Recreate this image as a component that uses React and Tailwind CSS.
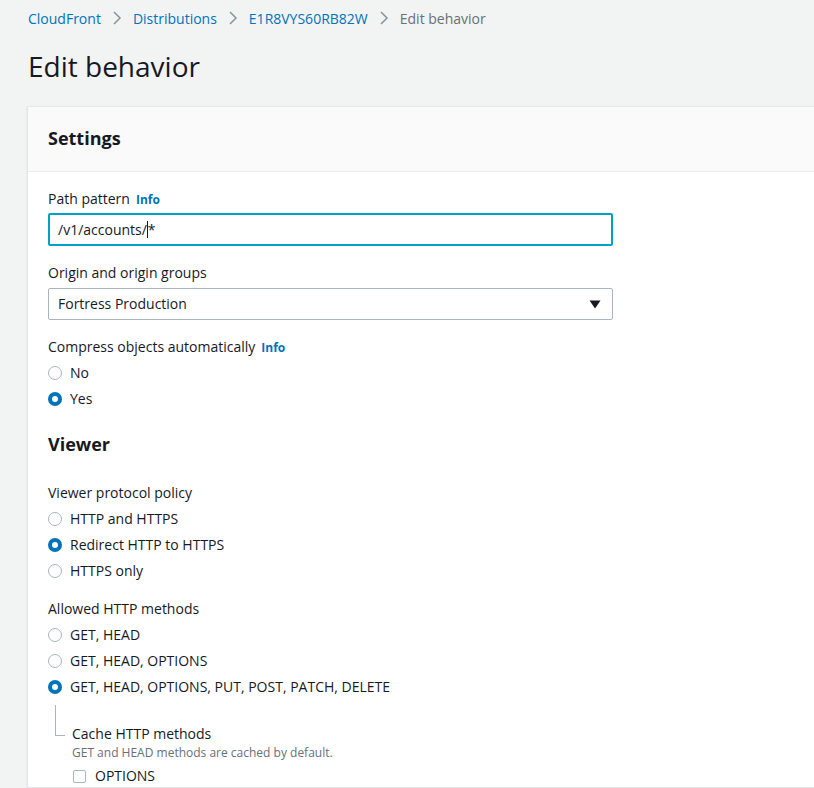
import React from "react";

const FONT = { fontFamily: '"Open Sans", "Liberation Sans", Arial, sans-serif' };

function Chevron() {
  return (
    <svg width="10" height="16" viewBox="0 0 10 16" className="mx-[11px]">
      <path d="M2 2 L8 8 L2 14" fill="none" stroke="#879596" strokeWidth="1.5" />
    </svg>
  );
}

function Radio({ checked, label }) {
  return (
    <div className="flex items-center h-[26px]">
      {checked ? (
        <span className="w-[14px] h-[14px] rounded-full bg-[#0073bb] flex items-center justify-center">
          <span className="w-[6px] h-[6px] rounded-full bg-white" />
        </span>
      ) : (
        <span className="w-[14px] h-[14px] rounded-full border border-[#aab7b8] bg-white" />
      )}
      <span className="ml-[8px] text-[14px] leading-[20px] pb-px text-[#16191f]">{label}</span>
    </div>
  );
}

function Label({ children, info }) {
  return (
    <div className="flex items-baseline h-[22px] pt-px text-[14px] leading-[20px] text-[#16191f]">
      <span>{children}</span>
      {info && <span className="ml-[6px] text-[12px] font-bold text-[#0073bb]">Info</span>}
    </div>
  );
}

export default function App() {
  return (
    <div style={FONT} className="w-[814px] h-[788px] overflow-hidden bg-[#f2f3f3] text-[#16191f]">
      <div className="pl-[28px] pt-[8px] flex items-center h-[20px] box-content text-[14px]">
        <span className="text-[#0073bb]">CloudFront</span>
        <Chevron />
        <span className="text-[#0073bb]">Distributions</span>
        <Chevron />
        <span className="text-[#0073bb]">E1R8VYS60RB82W</span>
        <Chevron />
        <span className="text-[#687078]">Edit behavior</span>
      </div>
      <div className="pl-[28px] mt-[19px] h-[40px] pb-[2px] flex items-center text-[28px] text-[#16191f]">
        Edit behavior
      </div>
      <div className="ml-[27px] mt-[19px] w-[820px] bg-white border border-[#e4e7e7] shadow-[0_1px_1px_0_rgba(0,28,36,0.2)]">
        <div className="h-[65px] pb-[2px] bg-[#fafafa] border-b border-[#eaeded] flex items-center pl-[20px]">
          <span className="text-[18px] font-bold">Settings</span>
        </div>
        <div className="pl-[20px] pt-[16px]">
          <Label info>Path pattern</Label>
          <div className="mt-[3px] w-[565px] h-[33px] border-2 border-[#00a1c9] rounded-[2px] flex items-center pl-[8px] pb-px text-[14px]">
            <span>/v1/accounts/</span>
            <span className="w-px h-[17px] bg-[#16191f]" />
            <span>*</span>
          </div>
          <div className="mt-[16px]">
            <Label>Origin and origin groups</Label>
          </div>
          <div className="mt-[4px] w-[565px] h-[32px] border border-[#aab7b8] rounded-[2px] flex items-center justify-between pl-[9px] pr-[11px] text-[14px]">
            <span className="pb-px">Fortress Production</span>
            <svg width="12" height="9" viewBox="0 0 12 9">
              <path d="M0.5 0.5 L11.5 0.5 L6 8.5 Z" fill="#16191f" />
            </svg>
          </div>
          <div className="mt-[16px]">
            <Label info>Compress objects automatically</Label>
          </div>
          <div className="mt-[2px]">
            <Radio label="No" />
            <Radio checked label="Yes" />
          </div>
          <div className="mt-[20px] h-[26px] pb-[2px] flex items-center text-[18px] font-bold">Viewer</div>
          <div className="mt-[24px]">
            <Label>Viewer protocol policy</Label>
          </div>
          <div className="mt-[2px]">
            <Radio label="HTTP and HTTPS" />
            <Radio checked label="Redirect HTTP to HTTPS" />
            <Radio label="HTTPS only" />
          </div>
          <div className="mt-[14px]">
            <Label>Allowed HTTP methods</Label>
          </div>
          <div className="mt-[2px]">
            <Radio label="GET, HEAD" />
            <Radio label="GET, HEAD, OPTIONS" />
            <Radio checked label="GET, HEAD, OPTIONS, PUT, POST, PATCH, DELETE" />
          </div>
          <div className="flex">
            <div className="ml-[7px] w-[10px] h-[31px] mt-[5px] border-l border-b border-[#aab7b8]" />
            <div className="ml-[7px] pt-[23px]">
              <div className="h-[22px] pb-px flex items-center text-[14px]">Cache HTTP methods</div>
              <div className="h-[16px] flex items-center text-[12px] text-[#687078]">GET and HEAD methods are cached by default.</div>
              <div className="mt-[4px] h-[22px] flex items-center">
                <span className="ml-[1px] w-[13px] h-[13px] border border-[#aab7b8] rounded-[2px] bg-white" />
                <span className="ml-[9px] pb-px text-[14px]">OPTIONS</span>
              </div>
            </div>
          </div>
        </div>
      </div>
    </div>
  );
}
